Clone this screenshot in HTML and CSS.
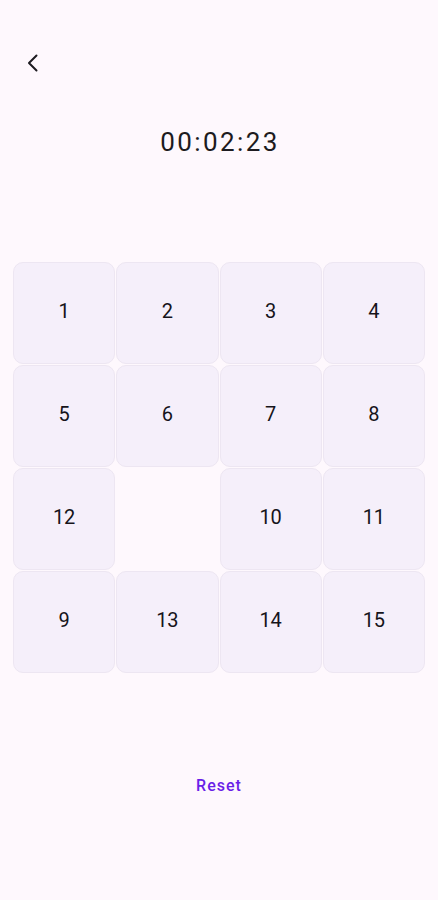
FILE: index.html
```html
<!DOCTYPE html>
<html lang="en">
  <head>
    <meta charset="UTF-8" />
    <meta name="viewport" content="width=device-width, initial-scale=1.0" />
    <title>Puzzle</title>
    <link rel="stylesheet" href="styles.css">
  </head>
  <body>
    <main>
      <header>
        <button class="tilbage" aria-label="Tilbage">
          <svg width="24" height="24" viewBox="0 0 24 24" fill="none" stroke="#1d1b20" stroke-width="2" stroke-linecap="round" stroke-linejoin="round">
            <path d="M15.5 4.5 L8 12 L15.5 19.5" />
          </svg>
        </button>
      </header>
      <h1 class="tid">00:02:23</h1>
      <section class="braet">
        <div class="brik">1</div>
        <div class="brik">2</div>
        <div class="brik">3</div>
        <div class="brik">4</div>
        <div class="brik">5</div>
        <div class="brik">6</div>
        <div class="brik">7</div>
        <div class="brik">8</div>
        <div class="brik">12</div>
        <div class="brik tom"></div>
        <div class="brik">10</div>
        <div class="brik">11</div>
        <div class="brik">9</div>
        <div class="brik">13</div>
        <div class="brik">14</div>
        <div class="brik">15</div>
      </section>
      <div class="bund">
        <button class="nulstil">Reset</button>
      </div>
    </main>
  </body>
</html>
```

FILE: styles.css
```css
* {
  box-sizing: border-box;
  margin: 0;
  padding: 0;
}

body {
  background: #fef8fd;
  font-family: Roboto, "Noto Sans", sans-serif;
  color: #1d1b20;
}

main {
  padding: 0 13px;
}

header {
  height: 100px;
  padding-top: 51px;
  padding-left: 8px;
}

.tilbage {
  border: none;
  background: none;
  width: 24px;
  height: 24px;
  display: block;
}

.tid {
  font-size: 26px;
  font-weight: 400;
  text-align: center;
  letter-spacing: 2.4px;
  line-height: 84px;
  padding-left: 2px;
}

.braet {
  margin-top: 78px;
  display: grid;
  grid-template-columns: repeat(4, 1fr);
  gap: 1px;
}

.brik {
  height: 102px;
  background: #f5effa;
  border: 1px solid #ede6f2;
  border-radius: 10px;
  display: flex;
  align-items: center;
  justify-content: center;
  padding-bottom: 5px;
  font-size: 20px;
  color: #16141a;
}

.tom {
  background: none;
  border: none;
}

.bund {
  display: flex;
  justify-content: center;
  margin-top: 99px;
}

.nulstil {
  border: none;
  background: none;
  font-family: Roboto, sans-serif;
  font-size: 16px;
  font-weight: 500;
  letter-spacing: 1px;
  color: #6a1fe8;
  padding: 4px 10px;
}
```
